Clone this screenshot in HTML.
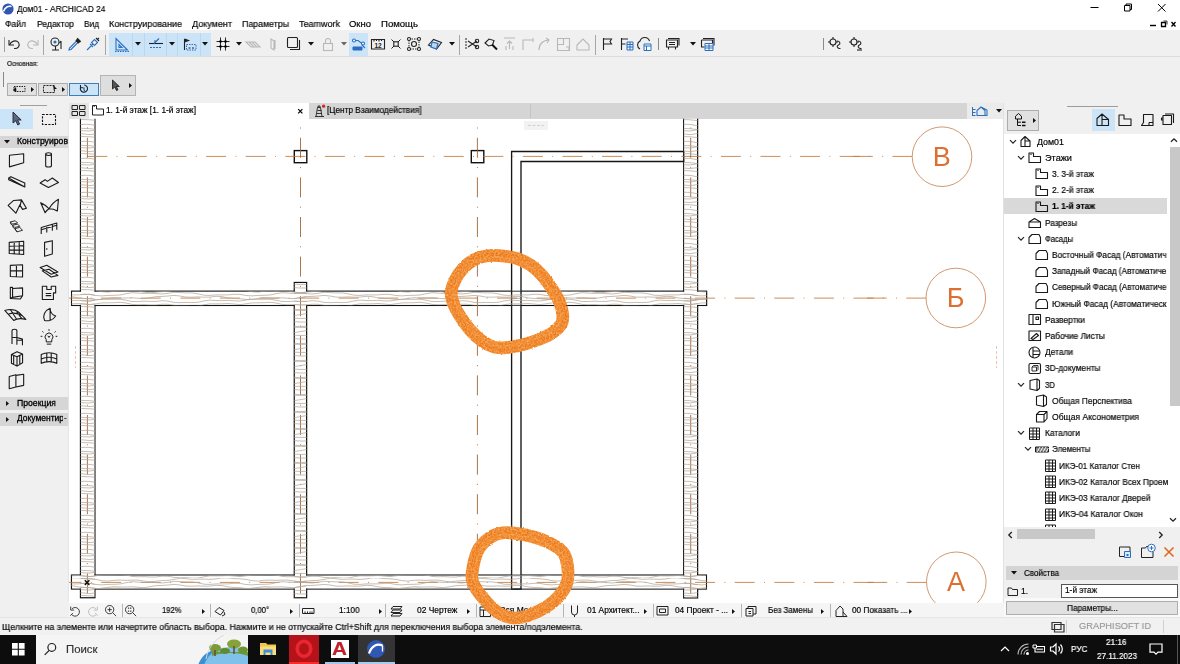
<!DOCTYPE html>
<html lang="ru"><head><meta charset="utf-8"><title>Дом01 - ARCHICAD 24</title>
<style>
html,body{margin:0;padding:0;}
body{width:1180px;height:664px;overflow:hidden;position:relative;background:#f0f0f0;font-family:"Liberation Sans",sans-serif;}
.t{position:absolute;white-space:nowrap;-webkit-text-stroke:.18px currentColor;will-change:transform;}
.b{position:absolute;box-sizing:border-box;overflow:visible;}
svg{shape-rendering:auto;}
</style></head><body>
<div class="b" style="left:0.0px;top:0.0px;width:1180.0px;height:30.3px;background:#fff;"></div>
<svg class="b" style="left:2.0px;top:3.0px;" width="12" height="12" viewBox="0 0 12 12"><circle cx="6" cy="6" r="5.6" fill="#2f56b0"/><path d="M1.5 8.5 C3 4 6.5 2.5 9.5 3.6" stroke="#fff" stroke-width="1.6" fill="none"/></svg>
<div class="t" style="left:17.0px;top:2.8px;font-size:9.60px;line-height:11.52px;transform:scaleX(0.8742);transform-origin:0 50%;color:#000;">Дом01 - ARCHICAD 24</div>
<div class="t" style="left:5.0px;top:18.8px;font-size:9.30px;line-height:11.16px;transform:scaleX(0.9185);transform-origin:0 50%;color:#000;">Файл</div>
<div class="t" style="left:37.0px;top:18.8px;font-size:9.30px;line-height:11.16px;transform:scaleX(0.9243);transform-origin:0 50%;color:#000;">Редактор</div>
<div class="t" style="left:84.0px;top:18.8px;font-size:9.30px;line-height:11.16px;transform:scaleX(0.8916);transform-origin:0 50%;color:#000;">Вид</div>
<div class="t" style="left:109.0px;top:18.8px;font-size:9.30px;line-height:11.16px;transform:scaleX(0.9682);transform-origin:0 50%;color:#000;">Конструирование</div>
<div class="t" style="left:192.0px;top:18.8px;font-size:9.30px;line-height:11.16px;transform:scaleX(0.9696);transform-origin:0 50%;color:#000;">Документ</div>
<div class="t" style="left:242.0px;top:18.8px;font-size:9.30px;line-height:11.16px;transform:scaleX(0.9481);transform-origin:0 50%;color:#000;">Параметры</div>
<div class="t" style="left:299.0px;top:18.8px;font-size:9.30px;line-height:11.16px;transform:scaleX(0.9676);transform-origin:0 50%;color:#000;">Teamwork</div>
<div class="t" style="left:349.0px;top:18.8px;font-size:9.30px;line-height:11.16px;transform:scaleX(1.0181);transform-origin:0 50%;color:#000;">Окно</div>
<div class="t" style="left:381.0px;top:18.8px;font-size:9.30px;line-height:11.16px;transform:scaleX(1.0301);transform-origin:0 50%;color:#000;">Помощь</div>
<svg class="b" style="left:1086.0px;top:0.0px;" width="90" height="16" viewBox="0 0 90 16"><path d="M4.5 7.5h8" stroke="#000" stroke-width="1"/><path d="M38.5 5.5h5.5v5.5h-5.5z M40 5.5v-1.5h5.5v5.5h-1.5" stroke="#000" stroke-width="1" fill="none"/><path d="M72 4l7.5 7.5M79.5 4l-7.5 7.5" stroke="#000" stroke-width="1"/></svg>
<svg class="b" style="left:1148.0px;top:18.0px;" width="32" height="12" viewBox="0 0 32 12"><path d="M2 7.5h6" stroke="#000" stroke-width="1.4"/><path d="M13.5 4.5h4v4h-4z" stroke="#000" stroke-width="1.3" fill="none"/><path d="M15.5 3h3.5v3.5" stroke="#000" stroke-width=".8" fill="none"/><path d="M23.5 4l4 4.5M27.5 4l-4 4.5" stroke="#000" stroke-width="1.3"/></svg>
<div class="b" style="left:0.0px;top:30.0px;width:1180.0px;height:27.0px;background:#f0f0f0;border-bottom:1px solid #dcdcdc;"></div>
<div class="b" style="left:0.0px;top:57.0px;width:1180.0px;height:46.0px;background:#f0f0f0;"></div>
<div class="b" style="left:4.0px;top:37.0px;width:1.0px;height:15.0px;background:#a0a0a0;"></div>
<svg class="b" style="left:7.0px;top:36.0px;" width="16" height="16" viewBox="0 0 16 16"><path d="M2 4v5h5" stroke="#222" fill="none" stroke-width="1.1"/><path d="M2.5 9 C4 5 9 3.5 11.5 6.5 C13.5 9.5 11 13 7 12.5" stroke="#222" fill="none" stroke-width="1.1"/></svg>
<svg class="b" style="left:24.0px;top:36.0px;" width="16" height="16" viewBox="0 0 16 16"><path d="M14 4v5h-5" stroke="#b8b8b8" fill="none" stroke-width="1.1"/><path d="M13.5 9 C12 5 7 3.5 4.5 6.5 C2.5 9.500 5 13 9 12.5" stroke="#b8b8b8" fill="none" stroke-width="1.1"/></svg>
<div class="b" style="left:43.0px;top:34.5px;width:1.0px;height:20.0px;background:#a6a6a6;"></div>
<svg class="b" style="left:49.0px;top:36.0px;" width="16" height="16" viewBox="0 0 16 16"><circle cx="6" cy="6" r="4" stroke="#222" fill="none" stroke-width="1.1"/><path d="M3 14h7M6.500 10v4" stroke="#222" fill="none" stroke-width="1.1"/><path d="M12 5v8M10.500 7l1.500-2" stroke="#222" fill="none" stroke-width="1.1"/><circle cx="6" cy="6" r="1.6" fill="#2a6fc0"/></svg>
<svg class="b" style="left:67.0px;top:36.0px;" width="16" height="16" viewBox="0 0 16 16"><path d="M2 14l2-.5 7-7-1.500-1.500-7 7z" stroke="#2a6fc0" fill="none" stroke-width="1.1"/><path d="M9 4l3 3M10 2.500l3.500 3.500" stroke="#222" stroke-width="1.800" fill="none"/></svg>
<svg class="b" style="left:85.0px;top:36.0px;" width="16" height="16" viewBox="0 0 16 16"><path d="M2 14l6-6M5 8l3 3M6.500 6.500l3 3 3-3-3-3z" stroke="#2a6fc0" fill="none" stroke-width="1.1"/><path d="M11 2l3 3M12.500 3.500l1.500-1.500" stroke="#222" fill="none" stroke-width="1.1"/></svg>
<div class="b" style="left:105.0px;top:34.5px;width:1.0px;height:20.0px;background:#a6a6a6;"></div>
<div class="b" style="left:109.4px;top:32.5px;width:101.6px;height:23.0px;background:#cce4f7;"></div>
<div class="b" style="left:131.8px;top:32.5px;width:1.0px;height:23.0px;background:#b9d7f0;"></div>
<div class="b" style="left:143.7px;top:32.5px;width:1.0px;height:23.0px;background:#b9d7f0;"></div>
<div class="b" style="left:166.0px;top:32.5px;width:1.0px;height:23.0px;background:#b9d7f0;"></div>
<div class="b" style="left:177.4px;top:32.5px;width:1.0px;height:23.0px;background:#b9d7f0;"></div>
<div class="b" style="left:199.7px;top:32.5px;width:1.0px;height:23.0px;background:#b9d7f0;"></div>
<svg class="b" style="left:114.0px;top:36.0px;" width="16" height="16" viewBox="0 0 16 16"><path d="M2 14V2.500L13.500 14z" stroke="#2a6fc0" fill="none" stroke-width="1.1"/><path d="M5 11.500V8.500l3 3z" stroke="#2a6fc0" fill="none" stroke-width="1.1"/><path d="M1 15.500h14" stroke="#2a6fc0" stroke-width="1" stroke-dasharray="1.500 1"/></svg>
<svg class="b" style="left:134.7px;top:42.0px;" width="6" height="4" viewBox="0 0 6 4"><path d="M0 0h6l-3 3.6z" fill="#111"/></svg>
<svg class="b" style="left:148.0px;top:36.0px;" width="16" height="16" viewBox="0 0 16 16"><path d="M1 7.500h14" stroke="#222" fill="none" stroke-width="1.1"/><path d="M6 7.500l5-5M8.500 5l-2.500 0" stroke="#2a6fc0" fill="none" stroke-width="1.1"/><path d="M2 11.500h12" stroke="#2a6fc0" stroke-width="1.200" stroke-dasharray="2 1"/></svg>
<svg class="b" style="left:168.7px;top:42.0px;" width="6" height="4" viewBox="0 0 6 4"><path d="M0 0h6l-3 3.6z" fill="#111"/></svg>
<svg class="b" style="left:182.0px;top:36.0px;" width="16" height="16" viewBox="0 0 16 16"><path d="M2.500 3v11M2.500 3l4 1.500-4 1.500" stroke="#222" stroke-width="1.100" fill="#222"/><path d="M4.500 8.500h9.500v5.500h-9.500z" stroke="#2a6fc0" fill="none" stroke-dasharray="1.500 1"/><path d="M6.500 12h2M10 12h2" stroke="#222" stroke-width="1.200"/></svg>
<svg class="b" style="left:202.3px;top:42.0px;" width="6" height="4" viewBox="0 0 6 4"><path d="M0 0h6l-3 3.6z" fill="#111"/></svg>
<svg class="b" style="left:215.0px;top:36.0px;" width="16" height="16" viewBox="0 0 16 16"><path d="M5.500 1.500v13M10.500 1.500v13M1.500 5.500h13M1.500 10.500h13" stroke="#111" stroke-width=".9"/><circle cx="5.500" cy="5.500" r="1.300"/><circle cx="10.500" cy="5.500" r="1.300"/><circle cx="5.500" cy="10.500" r="1.300"/><circle cx="10.500" cy="10.500" r="1.300"/></svg>
<svg class="b" style="left:236.0px;top:42.0px;" width="6" height="4" viewBox="0 0 6 4"><path d="M0 0h6l-3 3.6z" fill="#111"/></svg>
<svg class="b" style="left:245.0px;top:36.0px;" width="16" height="16" viewBox="0 0 16 16"><path d="M1 6l9 0 5 5-9 0z M4 6l5 5M7 6l5 5" stroke="#b8b8b8" fill="none" stroke-width="1.1"/></svg>
<svg class="b" style="left:266.0px;top:36.0px;" width="16" height="16" viewBox="0 0 16 16"><path d="M5 3l3 2v9l-3-2z M9 4v9" stroke="#b8b8b8" fill="none" stroke-width="1.1"/></svg>
<svg class="b" style="left:286.0px;top:36.0px;" width="16" height="16" viewBox="0 0 16 16"><rect x="1.500" y="1.500" width="10" height="10" rx="1" stroke="#222" fill="none" stroke-width="1.1"/><path d="M13.500 4v9.500h-9.500" stroke="#222" fill="none" stroke-width="1.1"/></svg>
<svg class="b" style="left:307.5px;top:42.0px;" width="6" height="4" viewBox="0 0 6 4"><path d="M0 0h6l-3 3.6z" fill="#111"/></svg>
<svg class="b" style="left:320.0px;top:36.0px;" width="16" height="16" viewBox="0 0 16 16"><rect x="3.500" y="7.500" width="9" height="7" stroke="#b8b8b8" fill="none" stroke-width="1.1"/><path d="M5.500 7.500v-2.500a2.500 2.500 0 0 1 5 0v2.500" stroke="#b8b8b8" fill="none" stroke-width="1.1"/></svg>
<svg class="b" style="left:340.6px;top:42.0px;" width="6" height="4" viewBox="0 0 6 4"><path d="M0 0h6l-3 3.6z" fill="#666"/></svg>
<div class="b" style="left:349.0px;top:32.5px;width:19.0px;height:23.0px;background:#cce4f7;"></div>
<svg class="b" style="left:351.0px;top:36.0px;" width="16" height="16" viewBox="0 0 16 16"><path d="M2 4.500h5l4 3h3" stroke="#2a6fc0" fill="none" stroke-width="1.1"/><circle cx="3" cy="4.500" r="1.500" fill="#fff" stroke="#2a6fc0" fill="none" stroke-width="1.1"/><circle cx="12" cy="7.500" r="1.500" fill="#fff" stroke="#2a6fc0" fill="none" stroke-width="1.1"/><path d="M2 11h9v3h-9z" stroke="#2a6fc0" fill="#2a6fc0"/><path d="M11 9l3 3" stroke="#2a6fc0" fill="none" stroke-width="1.1"/></svg>
<svg class="b" style="left:370.0px;top:36.0px;" width="16" height="16" viewBox="0 0 16 16"><path d="M1.500 3.500h13v9.500h-13zM4 3.500v2M6.500 3.500v1.500M9 3.500v2M11.500 3.500v1.500" stroke="#222" fill="none" stroke-width="1.1"/><text x="8" y="12" font-size="6.500" font-weight="bold" text-anchor="middle" fill="#222" font-family="Liberation Sans, sans-serif">12</text></svg>
<svg class="b" style="left:388.0px;top:36.0px;" width="16" height="16" viewBox="0 0 16 16"><path d="M3.500 3.500l9 9M12.500 3.500l-9 9" stroke="#222" stroke-width="1" fill="none"/><rect x="5.800" y="5.800" width="4.400" height="4.400" fill="#f0f0f0" stroke="#222" fill="none" stroke-width="1.1"/></svg>
<svg class="b" style="left:406.0px;top:36.0px;" width="16" height="16" viewBox="0 0 16 16"><path d="M3 3h10v10h-10z" stroke="#222" fill="none" stroke-dasharray="1.500 1"/><circle cx="3" cy="3" r="1.500" fill="#fff" stroke="#222" fill="none" stroke-width="1.1"/><circle cx="13" cy="3" r="1.500" fill="#fff" stroke="#222" fill="none" stroke-width="1.1"/><circle cx="13" cy="13" r="1.500" fill="#fff" stroke="#222" fill="none" stroke-width="1.1"/><circle cx="3" cy="13" r="1.500" fill="#fff" stroke="#222" fill="none" stroke-width="1.1"/><circle cx="8" cy="8" r="2.500" stroke="#222" fill="none" stroke-width="1.1"/></svg>
<svg class="b" style="left:427.0px;top:36.0px;" width="16" height="16" viewBox="0 0 16 16"><path d="M1.500 9l5-5.500 8 3-5 6.500z" stroke="#222" fill="none" stroke-width="1.1"/><path d="M5 6l6 1.500-1.500 5.500-5.500-2z" stroke="#2a6fc0" fill="#bcd7f2" stroke-width="1.200"/></svg>
<svg class="b" style="left:449.0px;top:42.0px;" width="6" height="4" viewBox="0 0 6 4"><path d="M0 0h6l-3 3.6z" fill="#111"/></svg>
<div class="b" style="left:459.0px;top:34.5px;width:1.0px;height:20.0px;background:#a6a6a6;"></div>
<svg class="b" style="left:464.0px;top:36.0px;" width="16" height="16" viewBox="0 0 16 16"><path d="M2 2v12" stroke="#222" stroke-width="1" stroke-dasharray="2 1"/><path d="M4 5l9 6M4 11l9-6" stroke="#222" fill="none" stroke-width="1.1"/><circle cx="13" cy="5" r="1.700" stroke="#222" fill="none" stroke-width="1.1"/><circle cx="13" cy="11" r="1.700" stroke="#222" fill="none" stroke-width="1.1"/></svg>
<svg class="b" style="left:483.0px;top:36.0px;" width="16" height="16" viewBox="0 0 16 16"><path d="M2 7l4-4 5 1.500-1.500 4.500-4 1z" stroke="#222" fill="none" stroke-width="1.1"/><path d="M9 8.500l5 5" stroke="#111" stroke-width="2"/></svg>
<svg class="b" style="left:502.0px;top:36.0px;" width="16" height="16" viewBox="0 0 16 16"><path d="M2 2h11M7.500 13v-8M5 7.500l2.500-2.500 2.500 2.500M4 10v4M11 10v4" stroke="#b8b8b8" fill="none" stroke-width="1.1"/></svg>
<svg class="b" style="left:520.0px;top:36.0px;" width="16" height="16" viewBox="0 0 16 16"><path d="M3 14v-10h10M13 2v4" stroke="#b8b8b8" fill="none" stroke-width="1.1"/></svg>
<svg class="b" style="left:537.0px;top:36.0px;" width="16" height="16" viewBox="0 0 16 16"><path d="M2 14c0-6 4-10 10-10M9 2l3 2-2 3" stroke="#b8b8b8" fill="none" stroke-width="1.1"/></svg>
<svg class="b" style="left:556.0px;top:36.0px;" width="16" height="16" viewBox="0 0 16 16"><path d="M1.500 2.500h12v12h-12z M7.500 2.500v6h-6M10 11h3v3" stroke="#b8b8b8" fill="none" stroke-width="1.1"/></svg>
<svg class="b" style="left:575.0px;top:36.0px;" width="16" height="16" viewBox="0 0 16 16"><path d="M2 9l6-6 6 6v5h-12z" stroke="#b8b8b8" fill="none" stroke-width="1.1"/></svg>
<div class="b" style="left:595.0px;top:34.5px;width:1.0px;height:20.0px;background:#a6a6a6;"></div>
<svg class="b" style="left:601.0px;top:36.0px;" width="16" height="16" viewBox="0 0 16 16"><path d="M2.500 2v12M2.500 3h8l-1.500 2.500 1.500 2.500h-8" stroke="#222" fill="none" stroke-width="1.1"/></svg>
<svg class="b" style="left:619.0px;top:36.0px;" width="16" height="16" viewBox="0 0 16 16"><path d="M2.500 2v12M2.500 3h6.500M2.500 8h4" stroke="#222" fill="none" stroke-width="1.1"/><path d="M8 6h6v8h-6zM8 8.500h6M8 11h6M11 6v8" stroke="#2a6fc0" stroke-width="1" fill="none"/></svg>
<svg class="b" style="left:637.0px;top:36.0px;" width="16" height="16" viewBox="0 0 16 16"><path d="M3 13a4.500 4.500 0 0 1 0-8 5 5 0 0 1 9.500 0" stroke="#222" fill="none" stroke-width="1.1"/><path d="M7 8h7v6.500h-7zM7 10h7M9.500 10v4.500" stroke="#2a6fc0" stroke-width="1" fill="#fff"/></svg>
<div class="b" style="left:658.0px;top:38.0px;width:1.0px;height:12.0px;background:#8a8a8a;"></div>
<svg class="b" style="left:665.0px;top:36.0px;" width="16" height="16" viewBox="0 0 16 16"><path d="M1.500 4h11v7h-11zM3 2.500h11v7M4 6.500h6M4 8.500h6M3.500 11v2.500M10.500 11v2.500" stroke="#222" fill="none" stroke-width="1.1"/></svg>
<svg class="b" style="left:689.5px;top:42.0px;" width="6" height="4" viewBox="0 0 6 4"><path d="M0 0h6l-3 3.6z" fill="#111"/></svg>
<svg class="b" style="left:700.0px;top:36.0px;" width="16" height="16" viewBox="0 0 16 16"><path d="M1.500 4h11v7h-3M3 2.500h11v7M1.500 4v7h3" stroke="#222" fill="none" stroke-width="1.1"/><path d="M5 7.500h8v7h-8zM5 10h8M5 12h8M9 7.500v7" stroke="#2a6fc0" stroke-width="1" fill="#fff"/></svg>
<div class="b" style="left:823.0px;top:38.0px;width:1.0px;height:12.0px;background:#8a8a8a;"></div>
<svg class="b" style="left:827.0px;top:36.0px;" width="16" height="16" viewBox="0 0 16 16"><circle cx="6" cy="6" r="3" stroke="#222" fill="none" stroke-width="1.1"/><path d="M6 1v2M6 9v2M1 6h2M9 6h2" stroke="#222" fill="none" stroke-width="1.1"/><path d="M10 5c3 0 4 3 1.500 4s-1 4 2 3.500" stroke="#222" fill="none" stroke-width="1.1"/></svg>
<svg class="b" style="left:848.0px;top:36.0px;" width="16" height="16" viewBox="0 0 16 16"><circle cx="6" cy="6" r="3" stroke="#222" fill="none" stroke-width="1.1"/><path d="M6 1v2M6 9v2M1 6h2M9 6h2" stroke="#222" fill="none" stroke-width="1.1"/><path d="M10 5c3 0 4 3 1.500 4s-1 4 2 3.500" stroke="#222" fill="none" stroke-width="1.1"/><path d="M9 14h5" stroke="#222" fill="none" stroke-width="1.1"/></svg>
<div class="t" style="left:7.0px;top:60.1px;font-size:7.00px;line-height:8.40px;transform:scaleX(0.9140);transform-origin:0 50%;color:#111;">Основная:</div>
<div class="b" style="left:3.0px;top:72.0px;width:1.0px;height:15.0px;background:#888;"></div>
<div class="b" style="left:7.0px;top:82.5px;width:29.5px;height:13.0px;background:#e1e1e1;border:1px solid #adadad;"></div>
<div class="b" style="left:38.0px;top:82.5px;width:29.5px;height:13.0px;background:#e1e1e1;border:1px solid #adadad;"></div>
<div class="b" style="left:69.0px;top:82.5px;width:30.0px;height:13.0px;background:#cce4f7;border:1px solid #3d7fb8;"></div>
<div class="b" style="left:100.0px;top:75.0px;width:36.0px;height:20.5px;background:#dedede;border:1px solid #b4b4b4;"></div>
<svg class="b" style="left:11.0px;top:84.0px;" width="18" height="10" viewBox="0 0 18 10"><path d="M3 2.500h11v5h-11z" stroke="#222" fill="none" stroke-dasharray="1.500 1"/><path d="M2 6l3-3 .5 5z" fill="#111"/></svg>
<svg class="b" style="left:30.5px;top:86.5px;" width="3" height="5" viewBox="0 0 3 5"><path d="M0 0v5l3-2.500z" fill="#111"/></svg>
<svg class="b" style="left:42.0px;top:84.0px;" width="18" height="10" viewBox="0 0 18 10"><path d="M1.500 1.500h11v7h-11z" stroke="#222" fill="none" stroke-dasharray="2 1"/><path d="M11 1l4 4h-2.500l-.5 2.500z" fill="#111"/></svg>
<svg class="b" style="left:61.5px;top:86.5px;" width="3" height="5" viewBox="0 0 3 5"><path d="M0 0v5l3-2.500z" fill="#111"/></svg>
<svg class="b" style="left:78.0px;top:84.0px;" width="12" height="10" viewBox="0 0 12 10"><path d="M2.500 3.500a3.600 3.600 0 1 0 3.600-2.500M2.500 1v2.800h2.800" stroke="#123" stroke-width="1.100" fill="none"/><path d="M6 3.500v3l1.500 1" stroke="#123" stroke-width=".9" fill="none"/></svg>
<svg class="b" style="left:111.0px;top:79.0px;" width="10" height="13" viewBox="0 0 10 13"><path d="M1.500 1v9l2.300-2 1.700 3.500 1.500-.7-1.700-3.300h3z" fill="#555" stroke="#111" stroke-width=".8"/></svg>
<svg class="b" style="left:129.0px;top:82.5px;" width="3" height="5" viewBox="0 0 3 5"><path d="M0 0v5l3-2.500z" fill="#111"/></svg>
<div class="b" style="left:69.0px;top:102.6px;width:898.0px;height:16.0px;background:#d5d5d5;"></div>
<div class="b" style="left:967.0px;top:102.6px;width:36.5px;height:16.0px;background:#ebebeb;"></div>
<div class="b" style="left:69.0px;top:102.6px;width:20.0px;height:16.0px;background:#e4e4e4;"></div>
<svg class="b" style="left:71.0px;top:104.0px;" width="15" height="13" viewBox="0 0 15 13"><path d="M1 1.500h5.500v4h-5.500zM8.500 1.500h5.500v4h-5.500zM1 7.500h5.500v4h-5.500zM8.500 7.500h5.500v4h-5.500z" stroke="#222" stroke-width="1" fill="none"/></svg>
<div class="b" style="left:89.0px;top:102.6px;width:220.0px;height:16.0px;background:#fff;"></div>
<svg class="b" style="left:91.0px;top:104.0px;" width="14" height="12" viewBox="0 0 14 12"><path d="M1.500 1.500h4v3.500h7v6h-11z" stroke="#222" stroke-width="1" fill="none"/><path d="M2.500 2.500h1.500" stroke="#2a6fc0" stroke-width="1.200"/></svg>
<div class="t" style="left:106.4px;top:105.7px;font-size:8.30px;line-height:9.96px;transform:scaleX(1.0014);transform-origin:0 50%;color:#000;">1. 1-й этаж [1. 1-й этаж]</div>
<svg class="b" style="left:296.5px;top:107.5px;" width="7" height="7" viewBox="0 0 7 7"><path d="M1.200 1.200l4.200 4.200M5.400 1.200l-4.200 4.200" stroke="#000" stroke-width="1.200"/></svg>
<svg class="b" style="left:313.0px;top:103.5px;" width="13" height="14" viewBox="0 0 13 14"><path d="M3 12.500l1.500-9h3l1.500 9M2 12.500h9M5 3.500v-1.500h2v1.500M4.500 6.500h4M4 9.500h5" stroke="#222" stroke-width=".9" fill="none"/><circle cx="10.600" cy="2.200" r="1.600" fill="#e02020"/></svg>
<div class="t" style="left:326.8px;top:105.7px;font-size:8.30px;line-height:9.96px;transform:scaleX(0.9948);transform-origin:0 50%;color:#000;">[Центр Взаимодействия]</div>
<div class="b" style="left:530.0px;top:103.5px;width:1.0px;height:14.0px;background:#c4c4c4;"></div>
<svg class="b" style="left:971.0px;top:105.0px;" width="22" height="12" viewBox="0 0 22 12"><path d="M1.500 2v9M1.500 4.500h3M1.500 7.500h3M1.500 10.500h3" stroke="#2a6fc0" stroke-width="1" fill="none"/><path d="M6 10.500v-5l4-3.500 4 3.500v5zM10 2l6 3v5.500h-2" stroke="#2a6fc0" stroke-width="1.100" fill="none"/></svg>
<svg class="b" style="left:996.0px;top:109.0px;" width="6" height="4" viewBox="0 0 6 4"><path d="M0 0h6l-3 3.6z" fill="#111"/></svg>
<div class="b" style="left:0.0px;top:103.0px;width:68.5px;height:508.0px;background:#f0f0f0;"></div>
<div class="b" style="left:20.0px;top:105.0px;width:27.0px;height:1.0px;background:#a0a0a0;"></div>
<div class="b" style="left:0.0px;top:109.0px;width:32.5px;height:19.5px;background:#cce4f7;"></div>
<svg class="b" style="left:11.0px;top:111.0px;" width="12" height="16" viewBox="0 0 12 16"><path d="M2 1v11l2.800-2.300 2 4.300 1.800-.9-2-4.100h3.600z" fill="#5a6a7a" stroke="#223" stroke-width=".9"/></svg>
<svg class="b" style="left:41.0px;top:113.0px;" width="16" height="13" viewBox="0 0 16 13"><path d="M1.500 1.500h13v10h-13z" stroke="#111" stroke-width="1.100" fill="none" stroke-dasharray="2.200 1.300"/></svg>
<div class="b" style="left:0.0px;top:135.5px;width:68.5px;height:12.0px;background:#d6d6d6;"></div>
<svg class="b" style="left:4.0px;top:140.0px;" width="6" height="4" viewBox="0 0 6 4"><path d="M0 0h6l-3 3.600z" fill="#111"/></svg>
<div class="t" style="left:17.0px;top:136.5px;font-size:8.30px;line-height:9.96px;transform:scaleX(1.0422);transform-origin:0 50%;color:#000;-webkit-text-stroke:.3px #000;overflow:hidden;max-width:51.5px;">Конструиров</div>
<div class="b" style="left:0.0px;top:397.0px;width:68.5px;height:13.0px;background:#d6d6d6;"></div>
<svg class="b" style="left:5.5px;top:401.0px;" width="3" height="5" viewBox="0 0 3 5"><path d="M0 0v5l3-2.500z" fill="#111"/></svg>
<div class="t" style="left:17.0px;top:398.5px;font-size:8.30px;line-height:9.96px;transform:scaleX(1.0448);transform-origin:0 50%;color:#000;-webkit-text-stroke:.3px #000;overflow:hidden;max-width:51.5px;">Проекция</div>
<div class="b" style="left:0.0px;top:412.5px;width:68.5px;height:13.0px;background:#d6d6d6;"></div>
<svg class="b" style="left:5.5px;top:416.5px;" width="3" height="5" viewBox="0 0 3 5"><path d="M0 0v5l3-2.500z" fill="#111"/></svg>
<div class="t" style="left:17.0px;top:414.0px;font-size:8.30px;line-height:9.96px;transform:scaleX(1.0202);transform-origin:0 50%;color:#000;-webkit-text-stroke:.3px #000;overflow:hidden;max-width:51.5px;">Документир</div>
<div class="b" style="left:0.0px;top:410.0px;width:68.5px;height:2.5px;background:#f0f0f0;"></div>
<div class="b" style="left:63.0px;top:412.5px;width:5.5px;height:13.0px;background:#d6d6d6;"></div>
<div class="t" style="left:63.5px;top:413.2px;font-size:8.00px;line-height:9.60px;color:#000;">-</div>
<svg class="b" style="left:7.0px;top:151.2px;" width="20" height="17.8" viewBox="0 0 18 16"><path d="M2.200 3.800L15 2.500V10.500L2.200 14.300Z" stroke="#1a1a1a" fill="none" stroke-width="1" stroke-linejoin="round"/></svg>
<svg class="b" style="left:39.0px;top:151.2px;" width="20" height="17.8" viewBox="0 0 18 16"><path d="M6 2.800a2.600 1.200 0 0 1 5.200 0v10.400a2.600 1.200 0 0 1-5.200 0z M6 2.800a2.600 1.200 0 0 0 5.200 0" stroke="#1a1a1a" fill="none" stroke-width="1" stroke-linejoin="round"/></svg>
<svg class="b" style="left:7.0px;top:173.2px;" width="20" height="17.8" viewBox="0 0 18 16"><path d="M1.500 4.500l2-1.200 12.500 5.700v3.500z M1.500 4.500v1.500l14.500 6.500" stroke="#1a1a1a" fill="none" stroke-width="1" stroke-linejoin="round"/></svg>
<svg class="b" style="left:39.0px;top:173.2px;" width="20" height="17.8" viewBox="0 0 18 16"><path d="M1 9l4.500-3 2 1.500 4.500-3 5.500 4-9 4.500z" stroke="#1a1a1a" fill="none" stroke-width="1" stroke-linejoin="round"/></svg>
<svg class="b" style="left:7.0px;top:195.7px;" width="20" height="17.8" viewBox="0 0 18 16"><path d="M1 8.500L6 4l7-.5 4.500 7.500-3.500 1-2.500-4L8 15.500z M13 3.500l-1 4.500" stroke="#1a1a1a" fill="none" stroke-width="1" stroke-linejoin="round"/></svg>
<svg class="b" style="left:39.0px;top:195.7px;" width="20" height="17.8" viewBox="0 0 18 16"><path d="M1.500 6c3 1.500 6 3.500 7.500 5.500 2-3.500 5-6.500 8.500-8.500l-1 10.500c-2.500-1.500-5-2-7.500-2-1.500 1-2.500 2-3.500 3.500z" stroke="#1a1a1a" fill="none" stroke-width="1" stroke-linejoin="round"/></svg>
<svg class="b" style="left:7.0px;top:217.7px;" width="20" height="17.8" viewBox="0 0 18 16"><path d="M3 3.500l4.500-1 2 2-4.500 1zM5 6.500l4.500-1 2 2-4.500 1zM7 9.500l4.500-1 2.500 2.500-5 1.500zM3 3.500l.5 2 1.500 1 .5 2 1.500 1 2 3" stroke="#1a1a1a" fill="none" stroke-width=".8"/></svg>
<svg class="b" style="left:39.0px;top:217.7px;" width="20" height="17.8" viewBox="0 0 18 16"><path d="M2 14.500v-6l14-4v6M2 10.500l14-4M7 7v6M12 5.500v6" stroke="#1a1a1a" fill="none" stroke-width="1" stroke-linejoin="round"/></svg>
<svg class="b" style="left:7.0px;top:239.2px;" width="20" height="17.8" viewBox="0 0 18 16"><path d="M2 3l13-1v12l-13-1zM2 6.500l13-.5M2 10l13 0M6.500 2.700v10.600M11 2.400v11.400" stroke="#1a1a1a" fill="none" stroke-width="1" stroke-linejoin="round"/></svg>
<svg class="b" style="left:39.0px;top:239.2px;" width="20" height="17.8" viewBox="0 0 18 16"><path d="M5 3l7-1.500v12l-7 2z" stroke="#1a1a1a" fill="none" stroke-width="1" stroke-linejoin="round"/><circle cx="7" cy="9" r=".7" fill="#111"/></svg>
<svg class="b" style="left:7.0px;top:262.2px;" width="20" height="17.8" viewBox="0 0 18 16"><path d="M3 3l11-.5v11l-11-.5zM3 8h11M8.500 2.700v10.600" stroke="#1a1a1a" fill="none" stroke-width="1" stroke-linejoin="round"/></svg>
<svg class="b" style="left:39.0px;top:262.2px;" width="20" height="17.8" viewBox="0 0 18 16"><path d="M1 5l6-2 10 6-6 2zM3 8l6-1.500 8 5.500-6 1.500z" stroke="#1a1a1a" fill="none" stroke-width="1" stroke-linejoin="round"/></svg>
<svg class="b" style="left:7.0px;top:284.2px;" width="20" height="17.8" viewBox="0 0 18 16"><path d="M3 3l2 0v9l-2 1zM5 4l9-.5v7l-9 1.500M3 13l9 .5 2-3" stroke="#1a1a1a" fill="none" stroke-width="1" stroke-linejoin="round"/></svg>
<svg class="b" style="left:39.0px;top:284.2px;" width="20" height="17.8" viewBox="0 0 18 16"><path d="M3 2h4v3h4v-3h4v6h-2v6h-10z M6 8.500h5M6 10.500h5" stroke="#1a1a1a" fill="none" stroke-width="1" stroke-linejoin="round"/></svg>
<svg class="b" style="left:7.0px;top:306.2px;" width="20" height="17.8" viewBox="0 0 18 16"><path d="M-2 4c5-1.500 10-.5 13 2l6 6c-4-1-8-1-11 1zM3 3.200l5.500 8.500M7.500 3.600l6 8M1.500 7.200c4.500-1.500 9-.5 12.500 1.600" stroke="#1a1a1a" fill="none" stroke-width="1" stroke-linejoin="round"/></svg>
<svg class="b" style="left:39.0px;top:306.2px;" width="20" height="17.8" viewBox="0 0 18 16"><path d="M5 13c-2-4 0-9 5-11 0 4 2 6 5 7-2 3-6 5-10 4zM10 2v11" stroke="#1a1a1a" fill="none" stroke-width="1" stroke-linejoin="round"/></svg>
<svg class="b" style="left:7.0px;top:327.7px;" width="20" height="17.8" viewBox="0 0 18 16"><path d="M4.500 14.500V2.500a2.200 1.400 0 0 1 4.400 0V8.500M4.500 8.500h4.400l5 1.500v5.500M8.900 8.500v2.500h5M8.900 11v4" stroke="#1a1a1a" fill="none" stroke-width="1" stroke-linejoin="round"/></svg>
<svg class="b" style="left:39.0px;top:327.7px;" width="20" height="17.8" viewBox="0 0 18 16"><path d="M6.500 10.500a3.500 3.500 0 1 1 5 0v2h-5zM7 14.500h4M9 1v1.500M3 3l1 1M15 3l-1 1M1.500 7.500h1.500M16.500 7.500h-1.500M8 7l1 1.500 1-1.500" stroke="#1a1a1a" fill="none" stroke-width=".9"/></svg>
<svg class="b" style="left:7.0px;top:350.2px;" width="20" height="17.8" viewBox="0 0 18 16"><path d="M4 4l5-2.500 5 2v8l-5 3-5-2.500zM4 4l5 2 5-2.500M9 6v8.500M6 5v8M11.500 5v8.500" stroke="#1a1a1a" fill="none" stroke-width="1" stroke-linejoin="round"/></svg>
<svg class="b" style="left:39.0px;top:350.2px;" width="20" height="17.8" viewBox="0 0 18 16"><path d="M2 4c4-2 10-2 14 0v8c-4-2-10-2-14 0zM2 8c4-2 10-2 14 0M7 2.800v8M11 2.800v8" stroke="#1a1a1a" fill="none" stroke-width="1" stroke-linejoin="round"/></svg>
<svg class="b" style="left:7.0px;top:372.2px;" width="20" height="17.8" viewBox="0 0 18 16"><path d="M2 4l6-1.500v11l-6 1.500zM8 3l7-1v10l-7 1.500" stroke="#1a1a1a" fill="none" stroke-width="1" stroke-linejoin="round"/></svg>
<div class="b" style="left:68.3px;top:118.5px;width:0.7px;height:484.0px;background:#e4e4e4;"></div>
<div class="b" style="left:69.0px;top:118.7px;width:934.2px;height:484.1px;background:#fff;"></div>
<svg class="b" style="left:0;top:0" width="1180" height="664" viewBox="0 0 1180 664"><defs><pattern id="wood" width="150" height="17" patternUnits="userSpaceOnUse"><path d="M0 3.8L6 3.2L12 2.6L18 2.4L24 1.4L30 0.3L36 0.7L42 1.3L48 1.1L54 1.1L60 1.4L66 0.9L72 -0.2L78 -0.2L84 0.6L90 0.8L96 1.4L102 2.7L108 3.1L114 2.3L120 2.1L126 2.4L132 2.1L138 2.1L144 3.1L150 3.8" stroke="#b3a799" stroke-width=".75" fill="none"/><path d="M0 4.2L6 4.6L12 5.0L18 4.3L24 3.3L30 3.6L36 3.9L42 3.9L48 4.8L54 6.2L60 6.4L66 5.9L72 5.9L78 5.9L84 5.3L90 5.4L96 6.5L102 6.9L108 6.4L114 6.3L120 6.0L126 4.7L132 3.7L138 4.1L144 4.4L150 4.2" stroke="#b3a799" stroke-width=".75" fill="none"/><path d="M0 8.7L6 7.7L12 7.4L18 7.0L24 6.4L30 7.0L36 8.1L42 8.2L48 7.9L54 8.2L60 8.1L66 7.3L72 7.6L78 8.9L84 9.5L90 9.7L96 10.4L102 10.5L108 9.4L114 8.7L120 9.0L126 9.0L132 8.8L138 9.3L144 9.7L150 8.7" stroke="#b3a799" stroke-width=".75" fill="none"/><path d="M0 12.4L6 12.4L12 11.7L18 12.1L24 13.4L30 13.7L36 13.4L42 13.6L48 13.3L54 11.9L60 11.1L66 11.5L72 11.6L78 11.3L84 11.8L90 12.0L96 11.0L102 10.1L108 10.3L114 10.3L120 10.2L126 11.2L132 12.5L138 12.5L144 12.2L150 12.4" stroke="#b3a799" stroke-width=".75" fill="none"/><path d="M0 16.0L6 16.0L12 15.2L18 15.3L24 16.4L30 16.8L36 16.7L42 17.2L48 17.1L54 15.8L60 14.8L66 14.9L72 14.8L78 14.5L84 15.0L90 15.6L96 14.8L102 13.9L108 13.8L114 13.7L120 13.3L126 14.0L132 15.4L138 15.8L144 15.6L150 16.0" stroke="#b3a799" stroke-width=".75" fill="none"/></pattern><clipPath id="cc"><rect x="69" y="118.7" width="934.2" height="484.1"/></clipPath></defs><g clip-path="url(#cc)"><rect x="80.5" y="100" width="14.4" height="497.7" fill="none" stroke="#141414" stroke-width="1.3"/><rect x="294.3" y="282.5" width="12.3" height="315.2" fill="none" stroke="#141414" stroke-width="1.3"/><rect x="683.7" y="100" width="13.9" height="497.9" fill="none" stroke="#141414" stroke-width="1.3"/><rect x="71.6" y="291.2" width="635" height="14.2" fill="none" stroke="#141414" stroke-width="1.3"/><rect x="71.5" y="575.1" width="634.9" height="13.9" fill="none" stroke="#141414" stroke-width="1.3"/><rect x="81.1" y="100.6" width="13.2" height="496.5" fill="#fff"/><rect x="294.9" y="283.1" width="11.1" height="314" fill="#fff"/><rect x="684.3" y="100.6" width="12.7" height="496.7" fill="#fff"/><rect x="72.2" y="291.8" width="633.8" height="13" fill="#fff"/><rect x="72.1" y="575.7" width="633.7" height="12.7" fill="#fff"/><path d="M511.600 151.500H683.700V161.500H521V589H511.600z" fill="#fff" stroke="#161616" stroke-width="1.35"/><path d="M511.300 291.200H521.200M511.300 305.400H521.200M511.300 575.100H521.200" stroke="#333" stroke-width="1"/><path d="M511.300 298.300H521.200" stroke="#999" stroke-width=".8"/><rect x="294.3" y="150.6" width="12.5" height="12.1" fill="#fff" stroke="#111" stroke-width="1.4"/><rect x="471.3" y="150.6" width="12.5" height="12.1" fill="#fff" stroke="#111" stroke-width="1.4"/><path d="M87.3 156.4H872.5" stroke="#c6783a" stroke-width=".85" fill="none" stroke-dasharray="20 9.300 1 9.300" stroke-dashoffset="0.0"/><path d="M66 298.1H886.5" stroke="#c6783a" stroke-width=".85" fill="none" stroke-dasharray="20 9.300 1 9.300" stroke-dashoffset="4.5"/><path d="M66 582.4H887" stroke="#c6783a" stroke-width=".85" fill="none" stroke-dasharray="20 9.300 1 9.300" stroke-dashoffset="4.5"/><path d="M87.4 119V597" stroke="#9c5c2b" stroke-width=".85" fill="none" stroke-dasharray="20 9.300 1 9.300" stroke-dashoffset="20.8"/><path d="M300.5 119V597" stroke="#9c5c2b" stroke-width=".85" fill="none" stroke-dasharray="20 9.300 1 9.300" stroke-dashoffset="20.8"/><path d="M477.4 119V597" stroke="#9c5c2b" stroke-width=".85" fill="none" stroke-dasharray="20 9.300 1 9.300" stroke-dashoffset="20.8"/><path d="M690.7 119V597" stroke="#9c5c2b" stroke-width=".85" fill="none" stroke-dasharray="20 9.300 1 9.300" stroke-dashoffset="20.8"/><path d="M912.400 156.400H853M926.300 298.100H867M926.800 582.400H867.500" stroke="#c6783a" stroke-width=".85" fill="none" stroke-dasharray="20 9.300 1 9.300"/><rect x="80.5" y="100" width="14.4" height="497.7" fill="url(#wood)"/><rect x="294.3" y="282.5" width="12.3" height="315.2" fill="url(#wood)"/><rect x="683.7" y="100" width="13.9" height="497.9" fill="url(#wood)"/><rect x="71.6" y="291.2" width="635" height="14.2" fill="url(#wood)"/><rect x="71.5" y="575.1" width="634.9" height="13.9" fill="url(#wood)"/><path d="M84.800 580.300l4.600 4.600M89.400 580.300l-4.600 4.600" stroke="#111" stroke-width="1.500"/><circle cx="942" cy="156.7" r="29.8" fill="#fff" stroke="#c98558" stroke-width=".85"/><text x="941.8" y="166.1" font-size="27" fill="#dd6f31" text-anchor="middle" font-family="Liberation Sans, sans-serif">В</text><circle cx="955.8" cy="298" r="29.8" fill="#fff" stroke="#c98558" stroke-width=".85"/><text x="955.6" y="307.4" font-size="27" fill="#dd6f31" text-anchor="middle" font-family="Liberation Sans, sans-serif">Б</text><circle cx="956.3" cy="581.8" r="29.8" fill="#fff" stroke="#c98558" stroke-width=".85"/><text x="956.1" y="591.2" font-size="27" fill="#dd6f31" text-anchor="middle" font-family="Liberation Sans, sans-serif">А</text><rect x="524" y="121" width="24" height="9" fill="#f2f2f2"/><path d="M528 125.500h16" stroke="#d2d2d2" stroke-width="1" stroke-dasharray="3 1.500"/><path d="M75.500 346v22" stroke="#e9c9b5" stroke-width="1" stroke-dasharray="3 2"/><path d="M996.500 346v22" stroke="#e9c9b5" stroke-width="1" stroke-dasharray="3 2"/></g></svg>
<div class="b" style="left:1003.0px;top:102.6px;width:1.3px;height:510.0px;background:#e2e2e2;"></div>
<div class="b" style="left:1004.3px;top:102.6px;width:176.0px;height:516.0px;background:#f0f0f0;"></div>
<div class="b" style="left:1066.8px;top:105.5px;width:51.0px;height:1.0px;background:#9c9c9c;"></div>
<div class="b" style="left:1007.0px;top:110.0px;width:31.5px;height:20.5px;background:#e1e1e1;border:1px solid #adadad;"></div>
<svg class="b" style="left:1013.0px;top:112.0px;" width="14" height="16" viewBox="0 0 14 16"><path d="M2.500 7v-2.800l3-2.700 3 2.700v2.800z" stroke="#111" stroke-width="1" fill="none"/><path d="M4.500 7v6.500h3.500M4.500 10.200h3.500" stroke="#111" stroke-width="1" fill="none"/><path d="M9 10.200h3.500M9 13.500h3.500" stroke="#111" stroke-width="1.500"/></svg>
<svg class="b" style="left:1032.5px;top:117.5px;" width="3" height="5" viewBox="0 0 3 5"><path d="M0 0v5l3-2.500z" fill="#111"/></svg>
<div class="b" style="left:1091.5px;top:109.0px;width:23.0px;height:22.0px;background:#cce4f7;"></div>
<svg class="b" style="left:1095.0px;top:112.0px;" width="16" height="16" viewBox="0 0 16 16"><path d="M2 13.500v-7l5-4.500 6.500 5.500v6zM7 2v11.500M7 7.500l6.500 0" stroke="#1a1a1a" stroke-width="1.1" fill="none" stroke-linejoin="round"/></svg>
<svg class="b" style="left:1117.0px;top:112.0px;" width="16" height="16" viewBox="0 0 16 16"><path d="M2 13.500v-10.500h5v4h7v6.500z" stroke="#1a1a1a" stroke-width="1.1" fill="none" stroke-linejoin="round"/></svg>
<svg class="b" style="left:1139.0px;top:112.0px;" width="16" height="16" viewBox="0 0 16 16"><path d="M4.500 2.500h9.500v11h-11.500l2-3zM10 10.500h4M10 10.500v3" stroke="#1a1a1a" stroke-width="1.1" fill="none" stroke-linejoin="round"/></svg>
<svg class="b" style="left:1160.0px;top:112.0px;" width="16" height="16" viewBox="0 0 16 16"><path d="M3 3.500h8.500v9h-8.500zM5 2h8.500v9M3 6h-1.500v2h1.500" stroke="#1a1a1a" stroke-width="1.1" fill="none" stroke-linejoin="round"/></svg>
<div class="b" style="left:1004.3px;top:134.0px;width:163.7px;height:393.0px;background:#fff;"></div>
<div class="b" style="left:1168.0px;top:134.0px;width:12.0px;height:393.0px;background:#fff;"></div>
<div class="b" style="left:1169.5px;top:147.0px;width:10.5px;height:259.0px;background:#c8c8c8;"></div>
<svg class="b" style="left:1170.0px;top:137.0px;" width="8" height="6" viewBox="0 0 8 6"><path d="M1 4.800l3-3 3 3" stroke="#222" stroke-width="1.300" fill="none"/></svg>
<svg class="b" style="left:1169.0px;top:517.0px;" width="8" height="6" viewBox="0 0 8 6"><path d="M1 1.200l3 3 3-3" stroke="#222" stroke-width="1.300" fill="none"/></svg>
<div class="b" style="left:1004.3px;top:198.3px;width:163.2px;height:15.5px;background:#d9d9d9;"></div>
<svg class="b" style="left:1009.0px;top:138.5px;" width="8" height="6" viewBox="0 0 8 6"><path d="M1 1.200l3 3 3-3" stroke="#222" stroke-width="1.200" fill="none"/></svg>
<svg class="b" style="left:1020.0px;top:135.0px;" width="14" height="13" viewBox="0 0 14 13"><path d="M1 11.500v-6l4-4 5 4.500v5.500zM5 1.500v10M5 6h5" stroke="#1a1a1a" stroke-width="1.1" fill="none" stroke-linejoin="round"/></svg>
<div class="t" style="left:1037.0px;top:136.5px;font-size:8.60px;line-height:10.32px;transform:scaleX(1.0313);transform-origin:0 50%;color:#000;">Дом01</div>
<svg class="b" style="left:1016.5px;top:154.7px;" width="8" height="6" viewBox="0 0 8 6"><path d="M1 1.200l3 3 3-3" stroke="#222" stroke-width="1.200" fill="none"/></svg>
<svg class="b" style="left:1027.5px;top:151.2px;" width="14" height="13" viewBox="0 0 14 13"><path d="M1 11.500v-9.500h4.500v3.500h7v6z" stroke="#1a1a1a" stroke-width="1.1" fill="none" stroke-linejoin="round"/><path d="M2.200 3.300h1.600" stroke="#222" stroke-width=".9"/></svg>
<div class="t" style="left:1044.5px;top:152.7px;font-size:8.60px;line-height:10.32px;transform:scaleX(1.0646);transform-origin:0 50%;color:#000;">Этажи</div>
<svg class="b" style="left:1035.0px;top:167.4px;" width="14" height="13" viewBox="0 0 14 13"><path d="M1 11.500v-9.500h4.500v3.500h7v6z" stroke="#1a1a1a" stroke-width="1.1" fill="none" stroke-linejoin="round"/><path d="M2.200 3.300h1.600" stroke="#222" stroke-width=".9"/></svg>
<div class="t" style="left:1052.0px;top:168.9px;font-size:8.60px;line-height:10.32px;transform:scaleX(0.9773);transform-origin:0 50%;color:#000;">3. 3-й этаж</div>
<svg class="b" style="left:1035.0px;top:183.6px;" width="14" height="13" viewBox="0 0 14 13"><path d="M1 11.500v-9.500h4.500v3.500h7v6z" stroke="#1a1a1a" stroke-width="1.1" fill="none" stroke-linejoin="round"/><path d="M2.200 3.300h1.600" stroke="#222" stroke-width=".9"/></svg>
<div class="t" style="left:1052.0px;top:185.1px;font-size:8.60px;line-height:10.32px;transform:scaleX(0.9773);transform-origin:0 50%;color:#000;">2. 2-й этаж</div>
<svg class="b" style="left:1035.0px;top:199.8px;" width="14" height="13" viewBox="0 0 14 13"><path d="M1 11.500v-9.500h4.500v3.500h7v6z" stroke="#1a1a1a" stroke-width="1.1" fill="none" stroke-linejoin="round"/><path d="M2.200 3.300h1.600" stroke="#222" stroke-width=".9"/></svg>
<div class="t" style="left:1052.0px;top:201.3px;font-size:8.60px;line-height:10.32px;transform:scaleX(0.9639);transform-origin:0 50%;font-weight:bold;color:#000;">1. 1-й этаж</div>
<svg class="b" style="left:1027.5px;top:216.0px;" width="14" height="13" viewBox="0 0 14 13"><path d="M1 11.500v-5.500l5.500-3.500 6 3.500v5.500zM1 6h11.500" stroke="#1a1a1a" stroke-width="1.1" fill="none" stroke-linejoin="round"/></svg>
<div class="t" style="left:1044.5px;top:217.5px;font-size:8.60px;line-height:10.32px;transform:scaleX(0.9530);transform-origin:0 50%;color:#000;">Разрезы</div>
<svg class="b" style="left:1016.5px;top:235.7px;" width="8" height="6" viewBox="0 0 8 6"><path d="M1 1.200l3 3 3-3" stroke="#222" stroke-width="1.200" fill="none"/></svg>
<svg class="b" style="left:1027.5px;top:232.2px;" width="14" height="13" viewBox="0 0 14 13"><path d="M1 11.500v-6l3-3h7l1.500 3v6z" stroke="#1a1a1a" stroke-width="1.1" fill="none" stroke-linejoin="round"/></svg>
<div class="t" style="left:1044.5px;top:233.7px;font-size:8.60px;line-height:10.32px;transform:scaleX(0.8860);transform-origin:0 50%;color:#000;">Фасады</div>
<svg class="b" style="left:1035.0px;top:248.4px;" width="14" height="13" viewBox="0 0 14 13"><path d="M1 11.500v-6l3-3h7l1.500 3v6z" stroke="#1a1a1a" stroke-width="1.1" fill="none" stroke-linejoin="round"/></svg>
<div class="t" style="left:1052.0px;top:249.9px;font-size:8.60px;line-height:10.32px;transform:scaleX(0.9622);transform-origin:0 50%;color:#000;">Восточный Фасад (Автоматич</div>
<svg class="b" style="left:1035.0px;top:264.6px;" width="14" height="13" viewBox="0 0 14 13"><path d="M1 11.500v-6l3-3h7l1.500 3v6z" stroke="#1a1a1a" stroke-width="1.1" fill="none" stroke-linejoin="round"/></svg>
<div class="t" style="left:1052.0px;top:266.1px;font-size:8.60px;line-height:10.32px;transform:scaleX(0.9503);transform-origin:0 50%;color:#000;">Западный Фасад (Автоматиче</div>
<svg class="b" style="left:1035.0px;top:280.8px;" width="14" height="13" viewBox="0 0 14 13"><path d="M1 11.500v-6l3-3h7l1.500 3v6z" stroke="#1a1a1a" stroke-width="1.1" fill="none" stroke-linejoin="round"/></svg>
<div class="t" style="left:1052.0px;top:282.3px;font-size:8.60px;line-height:10.32px;transform:scaleX(0.9457);transform-origin:0 50%;color:#000;">Северный Фасад (Автоматиче</div>
<svg class="b" style="left:1035.0px;top:297.0px;" width="14" height="13" viewBox="0 0 14 13"><path d="M1 11.500v-6l3-3h7l1.500 3v6z" stroke="#1a1a1a" stroke-width="1.1" fill="none" stroke-linejoin="round"/></svg>
<div class="t" style="left:1052.0px;top:298.5px;font-size:8.60px;line-height:10.32px;transform:scaleX(0.9658);transform-origin:0 50%;color:#000;">Южный Фасад (Автоматическ</div>
<svg class="b" style="left:1027.5px;top:313.2px;" width="14" height="13" viewBox="0 0 14 13"><path d="M1 1.500h4v10h-4zM5 1.500h7.500v10h-7.500M8 4h2.500v2.500h-2.500z" stroke="#1a1a1a" stroke-width="1.1" fill="none" stroke-linejoin="round"/></svg>
<div class="t" style="left:1044.5px;top:314.7px;font-size:8.60px;line-height:10.32px;transform:scaleX(0.9893);transform-origin:0 50%;color:#000;">Развертки</div>
<svg class="b" style="left:1027.5px;top:329.4px;" width="14" height="13" viewBox="0 0 14 13"><path d="M1 11.500v-9.500h11.500v9.500zM3 9.500l5.500-5 2 2-5.500 4z" stroke="#1a1a1a" stroke-width="1.1" fill="none" stroke-linejoin="round"/></svg>
<div class="t" style="left:1044.5px;top:330.9px;font-size:8.60px;line-height:10.32px;transform:scaleX(0.9824);transform-origin:0 50%;color:#000;">Рабочие Листы</div>
<svg class="b" style="left:1027.5px;top:345.6px;" width="14" height="13" viewBox="0 0 14 13"><circle cx="6.500" cy="6.500" r="5.500" stroke="#1a1a1a" stroke-width="1.1" fill="none" stroke-linejoin="round"/><path d="M5 1.200v10.600M5 5h6.500M5 8.500h6.500" stroke="#1a1a1a" stroke-width="1.1" fill="none" stroke-linejoin="round"/></svg>
<div class="t" style="left:1044.5px;top:347.1px;font-size:8.60px;line-height:10.32px;transform:scaleX(0.9733);transform-origin:0 50%;color:#000;">Детали</div>
<svg class="b" style="left:1027.5px;top:361.8px;" width="14" height="13" viewBox="0 0 14 13"><rect x="1" y="1.500" width="11.500" height="10" rx="1.500" stroke="#1a1a1a" stroke-width="1.1" fill="none" stroke-linejoin="round"/><path d="M4 5h4.500v4h-4.500zM4 5l1.500-1.500h4.500v4l-1.500 1.500" stroke="#1a1a1a" stroke-width=".9" fill="none"/></svg>
<div class="t" style="left:1044.5px;top:363.3px;font-size:8.60px;line-height:10.32px;transform:scaleX(0.9689);transform-origin:0 50%;color:#000;">3D-документы</div>
<svg class="b" style="left:1016.5px;top:381.5px;" width="8" height="6" viewBox="0 0 8 6"><path d="M1 1.200l3 3 3-3" stroke="#222" stroke-width="1.200" fill="none"/></svg>
<svg class="b" style="left:1027.5px;top:378.0px;" width="14" height="13" viewBox="0 0 14 13"><path d="M2 2.500l7-1.500 2.500 1.500v8l-2.500 2-7-1.500zM9 1v11.500" stroke="#1a1a1a" stroke-width="1.1" fill="none" stroke-linejoin="round"/></svg>
<div class="t" style="left:1044.5px;top:379.5px;font-size:8.60px;line-height:10.32px;transform:scaleX(0.9097);transform-origin:0 50%;color:#000;">3D</div>
<svg class="b" style="left:1035.0px;top:394.2px;" width="14" height="13" viewBox="0 0 14 13"><path d="M1.500 2.500l7-1.500 3 2v7.500l-3 2-7-1.500zM8.500 1v11.500" stroke="#1a1a1a" stroke-width="1.1" fill="none" stroke-linejoin="round"/></svg>
<div class="t" style="left:1052.0px;top:395.7px;font-size:8.60px;line-height:10.32px;transform:scaleX(0.9772);transform-origin:0 50%;color:#000;">Общая Перспектива</div>
<svg class="b" style="left:1035.0px;top:410.4px;" width="14" height="13" viewBox="0 0 14 13"><path d="M1.500 4.500l3-3h7.500v7l-3 3.500h-7.500zM1.500 4.500h7.500v7.500M9 4.500l3-3" stroke="#1a1a1a" stroke-width="1.1" fill="none" stroke-linejoin="round"/></svg>
<div class="t" style="left:1052.0px;top:411.9px;font-size:8.60px;line-height:10.32px;transform:scaleX(0.9952);transform-origin:0 50%;color:#000;">Общая Аксонометрия</div>
<svg class="b" style="left:1016.5px;top:430.1px;" width="8" height="6" viewBox="0 0 8 6"><path d="M1 1.200l3 3 3-3" stroke="#222" stroke-width="1.200" fill="none"/></svg>
<svg class="b" style="left:1027.5px;top:426.6px;" width="14" height="13" viewBox="0 0 14 13"><path d="M1.500 1h10v11.500h-10zM1.500 4h10M1.500 7h10M1.500 10h10M5 1v11.500M8.500 1v11.500" stroke="#1a1a1a" stroke-width="1" fill="none"/></svg>
<div class="t" style="left:1044.5px;top:428.1px;font-size:8.60px;line-height:10.32px;transform:scaleX(0.9705);transform-origin:0 50%;color:#000;">Каталоги</div>
<svg class="b" style="left:1023.5px;top:446.3px;" width="8" height="6" viewBox="0 0 8 6"><path d="M1 1.200l3 3 3-3" stroke="#222" stroke-width="1.200" fill="none"/></svg>
<svg class="b" style="left:1035.0px;top:442.8px;" width="14" height="13" viewBox="0 0 14 13"><path d="M.5 4h13v5h-13z" stroke="#1a1a1a" stroke-width="1" fill="#888"/><path d="M2 9l3-5M5 9l3-5M8 9l3-5M11 9l2.500-4" stroke="#fff" stroke-width=".9"/></svg>
<div class="t" style="left:1052.0px;top:444.3px;font-size:8.60px;line-height:10.32px;transform:scaleX(0.9331);transform-origin:0 50%;color:#000;">Элементы</div>
<svg class="b" style="left:1043.8px;top:459.0px;" width="14" height="13" viewBox="0 0 14 13"><path d="M1.500 1h10v11.500h-10zM1.500 4h10M1.500 7h10M1.500 10h10M5 1v11.500M8.500 1v11.500" stroke="#1a1a1a" stroke-width="1" fill="none"/></svg>
<div class="t" style="left:1058.7px;top:460.5px;font-size:8.60px;line-height:10.32px;transform:scaleX(0.9482);transform-origin:0 50%;color:#000;">ИКЭ-01 Каталог Стен</div>
<svg class="b" style="left:1043.8px;top:475.2px;" width="14" height="13" viewBox="0 0 14 13"><path d="M1.500 1h10v11.500h-10zM1.500 4h10M1.500 7h10M1.500 10h10M5 1v11.500M8.500 1v11.500" stroke="#1a1a1a" stroke-width="1" fill="none"/></svg>
<div class="t" style="left:1058.7px;top:476.7px;font-size:8.60px;line-height:10.32px;transform:scaleX(0.9639);transform-origin:0 50%;color:#000;">ИКЭ-02 Каталог Всех Проем</div>
<svg class="b" style="left:1043.8px;top:491.4px;" width="14" height="13" viewBox="0 0 14 13"><path d="M1.500 1h10v11.500h-10zM1.500 4h10M1.500 7h10M1.500 10h10M5 1v11.500M8.500 1v11.500" stroke="#1a1a1a" stroke-width="1" fill="none"/></svg>
<div class="t" style="left:1058.7px;top:492.9px;font-size:8.60px;line-height:10.32px;transform:scaleX(0.9603);transform-origin:0 50%;color:#000;">ИКЭ-03 Каталог Дверей</div>
<svg class="b" style="left:1043.8px;top:507.6px;" width="14" height="13" viewBox="0 0 14 13"><path d="M1.500 1h10v11.500h-10zM1.500 4h10M1.500 7h10M1.500 10h10M5 1v11.500M8.500 1v11.500" stroke="#1a1a1a" stroke-width="1" fill="none"/></svg>
<div class="t" style="left:1058.7px;top:509.1px;font-size:8.60px;line-height:10.32px;transform:scaleX(0.9777);transform-origin:0 50%;color:#000;">ИКЭ-04 Каталог Окон</div>
<svg class="b" style="left:1043.8px;top:523.8px;" width="14" height="5" viewBox="0 0 14 5"><path d="M1.500 1h10v11.500h-10zM1.500 4h10M1.500 7h10M1.500 10h10M5 1v11.500M8.500 1v11.500" stroke="#1a1a1a" stroke-width="1" fill="none"/></svg>
<div class="b" style="left:1167.5px;top:134.0px;width:1.0px;height:393.0px;background:#fff;"></div>
<div class="b" style="left:1004.3px;top:527.0px;width:175.7px;height:14.0px;background:#f0f0f0;"></div>
<div class="b" style="left:1016.8px;top:528.5px;width:78.2px;height:10.0px;background:#c8c8c8;"></div>
<svg class="b" style="left:1007.0px;top:530.5px;" width="6" height="8" viewBox="0 0 6 8"><path d="M4.800 1l-3 3 3 3" stroke="#222" stroke-width="1.300" fill="none"/></svg>
<svg class="b" style="left:1158.0px;top:530.5px;" width="6" height="8" viewBox="0 0 6 8"><path d="M1.200 1l3 3-3 3" stroke="#222" stroke-width="1.300" fill="none"/></svg>
<svg class="b" style="left:1118.0px;top:545.0px;" width="14" height="14" viewBox="0 0 14 14"><path d="M1.500 2h10.500v9.500h-10.500z" stroke="#222" stroke-width="1" fill="none"/><path d="M6.500 6.500h6v6h-6z" stroke="#2a6fc0" stroke-width="1" fill="#dbeaf8"/><path d="M8.500 9h2v2h-2z" fill="#2a6fc0"/></svg>
<svg class="b" style="left:1140.0px;top:543.0px;" width="16" height="16" viewBox="0 0 16 16"><path d="M1.500 5h4l1-1.500h3M13 9v5.500h-11.500v-9.500" stroke="#222" stroke-width="1" fill="none"/><circle cx="11.500" cy="5" r="3.800" stroke="#2a6fc0" stroke-width="1" fill="#fff"/><path d="M9.500 5h4M11.500 3v4" stroke="#2a6fc0" stroke-width="1"/></svg>
<svg class="b" style="left:1163.0px;top:546.0px;" width="12" height="12" viewBox="0 0 12 12"><path d="M1.500 1.500l9 9M10.500 1.500l-9 9" stroke="#e0641a" stroke-width="1.500"/></svg>
<div class="b" style="left:1006.0px;top:565.5px;width:172.0px;height:14.5px;background:#d4d4d4;"></div>
<svg class="b" style="left:1010.5px;top:571.0px;" width="6" height="4" viewBox="0 0 6 4"><path d="M0 0h6l-3 3.600z" fill="#111"/></svg>
<div class="t" style="left:1024.0px;top:567.5px;font-size:8.60px;line-height:10.32px;transform:scaleX(0.9269);transform-origin:0 50%;color:#000;">Свойства</div>
<svg class="b" style="left:1007.0px;top:585.5px;" width="12" height="11" viewBox="0 0 12 11"><path d="M1 9.500v-7.500h3.500l1 1.500h5v6z" stroke="#222" stroke-width="1" fill="none"/></svg>
<div class="t" style="left:1021.0px;top:586.0px;font-size:8.60px;line-height:10.32px;transform:scaleX(0.9761);transform-origin:0 50%;color:#000;">1.</div>
<div class="b" style="left:1061.0px;top:584.0px;width:117.0px;height:13.5px;background:#fff;border:1px solid #555;"></div>
<div class="t" style="left:1064.5px;top:586.2px;font-size:8.30px;line-height:9.96px;transform:scaleX(0.9923);transform-origin:0 50%;color:#000;">1-й этаж</div>
<div class="b" style="left:1004.3px;top:598.0px;width:175.7px;height:19.0px;background:#f9f9f9;"></div>
<div class="b" style="left:1006.0px;top:600.5px;width:172.0px;height:14.5px;background:#e1e1e1;border:1px solid #adadad;"></div>
<div class="t" style="left:1066.5px;top:602.8px;font-size:8.60px;line-height:10.32px;transform:scaleX(0.9621);transform-origin:0 50%;color:#000;">Параметры...</div>
<div class="b" style="left:0.0px;top:601.4px;width:69.0px;height:17.2px;background:#f0f0f0;"></div>
<div class="b" style="left:69.0px;top:602.8px;width:935.3px;height:14.6px;background:#f5f5f5;"></div>
<svg class="b" style="left:69.0px;top:604.2px;" width="13" height="13" viewBox="0 0 15 15"><path d="M3 12a5 5 0 1 0 .5-6.500M2 3v4h4" stroke="#222" stroke-width="1" fill="none"/><path d="M1.500 13.500l3-3" stroke="#222" stroke-width="1" fill="none"/></svg>
<svg class="b" style="left:86.0px;top:604.2px;" width="13" height="13" viewBox="0 0 15 15"><path d="M12 12a5 5 0 1 1-.5-6.500M13 3v4h-4" stroke="#b5b5b5" stroke-width="1" fill="none"/><path d="M13.500 13.500l-3-3" stroke="#b5b5b5" stroke-width="1" fill="none"/></svg>
<svg class="b" style="left:104.0px;top:604.2px;" width="13" height="13" viewBox="0 0 15 15"><circle cx="6.500" cy="6.500" r="4.800" stroke="#222" stroke-width="1" fill="none"/><path d="M10 10l4 4M4 6.500h5M6.500 4v5" stroke="#222" stroke-width="1" fill="none"/></svg>
<div class="b" style="left:121.5px;top:604.0px;width:1.0px;height:13.5px;background:#b4b4b4;"></div>
<svg class="b" style="left:124.0px;top:604.2px;" width="13" height="13" viewBox="0 0 15 15"><circle cx="6.500" cy="6.500" r="4.800" stroke="#222" stroke-width="1" fill="none"/><path d="M10 10l4 4" stroke="#222" stroke-width="1" fill="none"/><path d="M4.500 5l1.500-.500M8.500 5l-1.500-.500M4.500 8l1.500.500M8.500 8l-1.500.500" stroke="#222" stroke-width="1.200"/></svg>
<div class="t" style="left:161.7px;top:606.0px;font-size:8.30px;line-height:9.96px;transform:scaleX(0.9186);transform-origin:0 50%;color:#000;">192%</div>
<svg class="b" style="left:201.5px;top:608.5px;" width="3" height="5" viewBox="0 0 3 5"><path d="M0 0v5l3-2.500z" fill="#111"/></svg>
<div class="b" style="left:210.0px;top:604.0px;width:1.0px;height:13.5px;background:#b4b4b4;"></div>
<svg class="b" style="left:213.0px;top:604.5px;" width="14" height="13" viewBox="0 0 14 13"><path d="M2 6.500l4-4 5 3-3.500 4.500zM9 11l3-1.500-1-2.500" stroke="#222" stroke-width="1" fill="none"/></svg>
<div class="t" style="left:250.7px;top:606.0px;font-size:8.30px;line-height:9.96px;transform:scaleX(0.9244);transform-origin:0 50%;color:#000;">0,00°</div>
<svg class="b" style="left:289.5px;top:608.5px;" width="3" height="5" viewBox="0 0 3 5"><path d="M0 0v5l3-2.500z" fill="#111"/></svg>
<div class="b" style="left:298.5px;top:604.0px;width:1.0px;height:13.5px;background:#b4b4b4;"></div>
<svg class="b" style="left:302.0px;top:606.5px;" width="13" height="8" viewBox="0 0 13 8"><path d="M.5 1.500h11.500v5h-11.500zM3 6.500v-2M5.500 6.500v-2M8 6.500v-2M10 6.500v-2" stroke="#222" stroke-width="1" fill="none"/></svg>
<div class="t" style="left:339.0px;top:606.0px;font-size:8.30px;line-height:9.96px;transform:scaleX(0.9871);transform-origin:0 50%;color:#000;">1:100</div>
<svg class="b" style="left:378.5px;top:608.5px;" width="3" height="5" viewBox="0 0 3 5"><path d="M0 0v5l3-2.500z" fill="#111"/></svg>
<div class="b" style="left:384.5px;top:604.0px;width:1.0px;height:13.5px;background:#b4b4b4;"></div>
<svg class="b" style="left:389.0px;top:604.0px;" width="14" height="14" viewBox="0 0 14 14"><path d="M2 5l2-2.500h9l-2 2.500zM2 8.500l2-2.500h9l-2 2.500zM2 12l2-2.500h9l-2 2.500z" stroke="#222" stroke-width="1" fill="none"/></svg>
<div class="t" style="left:417.0px;top:606.0px;font-size:8.30px;line-height:9.96px;transform:scaleX(1.0150);transform-origin:0 50%;color:#000;">02 Чертеж</div>
<svg class="b" style="left:466.5px;top:608.5px;" width="3" height="5" viewBox="0 0 3 5"><path d="M0 0v5l3-2.500z" fill="#111"/></svg>
<div class="b" style="left:476.0px;top:604.0px;width:1.0px;height:13.5px;background:#b4b4b4;"></div>
<svg class="b" style="left:479.0px;top:604.5px;" width="13" height="13" viewBox="0 0 13 13"><path d="M1 2h10.500v9.500h-10.500zM1 5h10.500M4.500 5v6.500" stroke="#222" stroke-width="1" fill="none"/></svg>
<div class="t" style="left:500.0px;top:606.0px;font-size:8.30px;line-height:9.96px;transform:scaleX(1.0156);transform-origin:0 50%;color:#000;">Вся Модель</div>
<div class="b" style="left:563.3px;top:604.0px;width:1.0px;height:13.5px;background:#b4b4b4;"></div>
<svg class="b" style="left:569.0px;top:604.0px;" width="11" height="14" viewBox="0 0 11 14"><path d="M2.500 1.500v6.500a3 3 0 0 0 6 0v-6.500M5.500 11v2.500" stroke="#222" stroke-width="1" fill="none"/></svg>
<div class="t" style="left:586.6px;top:606.0px;font-size:8.30px;line-height:9.96px;transform:scaleX(1.0052);transform-origin:0 50%;color:#000;">01 Архитект...</div>
<svg class="b" style="left:644.1px;top:608.5px;" width="3" height="5" viewBox="0 0 3 5"><path d="M0 0v5l3-2.500z" fill="#111"/></svg>
<div class="b" style="left:652.5px;top:604.0px;width:1.0px;height:13.5px;background:#b4b4b4;"></div>
<svg class="b" style="left:656.0px;top:605.0px;" width="13" height="12" viewBox="0 0 13 12"><path d="M1 1.500h11v8.500h-11zM3.500 4h6v3.500h-6z" stroke="#222" stroke-width="1" fill="none"/></svg>
<div class="t" style="left:675.0px;top:606.0px;font-size:8.30px;line-height:9.96px;transform:scaleX(0.9968);transform-origin:0 50%;color:#000;">04 Проект - ...</div>
<svg class="b" style="left:731.5px;top:608.5px;" width="3" height="5" viewBox="0 0 3 5"><path d="M0 0v5l3-2.500z" fill="#111"/></svg>
<div class="b" style="left:741.0px;top:604.0px;width:1.0px;height:13.5px;background:#b4b4b4;"></div>
<svg class="b" style="left:745.0px;top:604.5px;" width="14" height="13" viewBox="0 0 14 13"><path d="M1 3.500h7v7.500h-7zM3 3.500v-2h8v7.500h-3M3.500 6.500h2.500M3.500 8.500h2.500" stroke="#222" stroke-width="1" fill="none"/></svg>
<div class="t" style="left:768.0px;top:606.0px;font-size:8.30px;line-height:9.96px;transform:scaleX(0.9679);transform-origin:0 50%;color:#000;">Без Замены</div>
<svg class="b" style="left:820.5px;top:608.5px;" width="3" height="5" viewBox="0 0 3 5"><path d="M0 0v5l3-2.500z" fill="#111"/></svg>
<div class="b" style="left:829.5px;top:604.0px;width:1.0px;height:13.5px;background:#b4b4b4;"></div>
<svg class="b" style="left:834.0px;top:604.0px;" width="14" height="14" viewBox="0 0 14 14"><path d="M2 12.500v-6l4-4.500 3 3v7.500zM9 8l4 4.500h-4" stroke="#222" stroke-width="1" fill="none"/></svg>
<div class="t" style="left:852.0px;top:606.0px;font-size:8.30px;line-height:9.96px;transform:scaleX(0.9904);transform-origin:0 50%;color:#000;">00 Показать ...</div>
<svg class="b" style="left:908.5px;top:608.5px;" width="3" height="5" viewBox="0 0 3 5"><path d="M0 0v5l3-2.500z" fill="#111"/></svg>
<div class="b" style="left:0.0px;top:617.4px;width:1180.0px;height:17.2px;background:#f1f1f1;border-top:1px solid #e6e6e6;"></div>
<div class="t" style="left:2.0px;top:621.9px;font-size:9.00px;line-height:10.80px;transform:scaleX(0.9734);transform-origin:0 50%;color:#000;">Щелкните на элементе или начертите область выбора. Нажмите и не отпускайте Ctrl+Shift для переключения выбора элемента/подэлемента.</div>
<div class="b" style="left:1066.0px;top:620.0px;width:1.0px;height:13.0px;background:#cfcfcf;"></div>
<div class="b" style="left:1162.5px;top:620.0px;width:1.0px;height:13.0px;background:#cfcfcf;"></div>
<svg class="b" style="left:1051.0px;top:621.0px;" width="14" height="12" viewBox="0 0 14 12"><path d="M1 1.500h9v7h-9zM3.500 3.500h9.500v7.500h-9.500z" stroke="#333" stroke-width="1.200" fill="#f0f0f0"/></svg>
<div class="t" style="left:1078.5px;top:621.4px;font-size:9.30px;line-height:11.16px;transform:scaleX(0.9977);transform-origin:0 50%;color:#9a9a9a;">GRAPHISOFT ID</div>
<div class="b" style="left:0.0px;top:634.6px;width:1180.0px;height:29.4px;background:#0d0d0d;"></div>
<svg class="b" style="left:11.5px;top:642.8px;" width="12.6" height="12.6" viewBox="0 0 13.8 13.8"><path d="M0 0h6.300v6.300h-6.300zM7.500 0h6.300v6.300h-6.300zM0 7.500h6.300v6.300h-6.300zM7.500 7.500h6.300v6.300h-6.300z" fill="#fff"/></svg>
<div class="b" style="left:35.6px;top:634.6px;width:212.4px;height:29.4px;background:#f4f4f4;"></div>
<svg class="b" style="left:44.0px;top:642.0px;" width="14" height="14" viewBox="0 0 14 14"><circle cx="7.800" cy="5.400" r="3.900" stroke="#222" stroke-width="1.200" fill="none"/><path d="M5.200 8.300l-4.500 4.500" stroke="#222" stroke-width="1.200"/></svg>
<div class="t" style="left:65.5px;top:643.2px;font-size:11.00px;line-height:13.20px;transform:scaleX(1.0335);transform-origin:0 50%;color:#333;">Поиск</div>
<svg class="b" style="left:198.0px;top:634.6px;" width="50" height="29.4" viewBox="0 0 50 29.4"><defs><clipPath id="dp"><rect x="0" y="0" width="50" height="29.400"/></clipPath></defs><g clip-path="url(#dp)"><path d="M4 30c6-14 18-18 30-18s16 6 18 10v10z" fill="#7fc1ea"/><path d="M0 30c4-10 10-14 18-15-6 4-10 9-12 15z" fill="#3f8fd0"/><path d="M14 21c6-3 26-5 36 0v-4h-36z" fill="#6a9a3a"/><ellipse cx="17" cy="13" rx="6" ry="4" fill="#7c9a35"/><ellipse cx="36" cy="9" rx="7" ry="4.500" fill="#86a33b"/><ellipse cx="27" cy="16" rx="5" ry="3" fill="#5f8a2e"/><ellipse cx="45" cy="15" rx="5" ry="3.500" fill="#6d9433"/><path d="M17 15v6M36 11v8" stroke="#6b4a2a" stroke-width="1.500"/><path d="M8 24c2-12 10-20 18-24" stroke="#c8dbe8" stroke-width="1" fill="none"/></g></svg>
<svg class="b" style="left:259.5px;top:642.0px;" width="17" height="14" viewBox="0 0 17 14"><path d="M0 1h6l1.500 1.500h8.500v10.500h-16z" fill="#f3c64a"/><path d="M0 4.500h16v8.500h-16z" fill="#f9dc7c"/><path d="M3.500 7.500h9v5.500h-9z" fill="#3f8fd6"/><path d="M5.500 10.500h5v2.500h-5z" fill="#f9dc7c"/></svg>
<div class="b" style="left:289.0px;top:634.6px;width:30.2px;height:29.4px;background:#b4131a;"></div>
<div class="b" style="left:289.0px;top:662.0px;width:30.2px;height:2.0px;background:#ff2a2a;"></div>
<svg class="b" style="left:294.0px;top:639.0px;" width="20" height="20" viewBox="0 0 20 20"><ellipse cx="10" cy="9.800" rx="6.800" ry="7.600" fill="none" stroke="#ea2631" stroke-width="3.600"/></svg>
<div class="b" style="left:331.0px;top:639.8px;width:18.0px;height:18.2px;background:#fff;"></div>
<div class="t" style="left:332.3px;top:638.2px;font-size:19.00px;line-height:22.80px;transform:scaleX(1.0932);transform-origin:0 50%;font-weight:bold;color:#c2202a;">A</div>
<div class="b" style="left:325.0px;top:662.0px;width:30.0px;height:2.0px;background:#9fc8ea;"></div>
<div class="b" style="left:358.0px;top:634.6px;width:36.8px;height:29.4px;background:#343434;"></div>
<div class="b" style="left:358.0px;top:662.0px;width:36.8px;height:2.0px;background:#a5cdf0;"></div>
<svg class="b" style="left:366.0px;top:639.0px;" width="20" height="20" viewBox="0 0 20 20"><circle cx="10" cy="10" r="9" fill="#3057b3"/><path d="M3 14.500 C5.500 7 11 4 16.500 6.500" stroke="#fff" stroke-width="2.200" fill="none"/><path d="M16.500 6.500v6" stroke="#fff" stroke-width="1.300"/></svg>
<svg class="b" style="left:1000.0px;top:645.0px;" width="10" height="8" viewBox="0 0 10 8"><path d="M1 6l4-4 4 4" stroke="#fff" stroke-width="1.200" fill="none"/></svg>
<svg class="b" style="left:1016.0px;top:642.0px;" width="14" height="14" viewBox="0 0 14 14"><path d="M2 12.500a10.500 10.500 0 0 1 10.500-10.500M5 12.500a7.500 7.500 0 0 1 7.500-7.500M8 12.500a4.500 4.500 0 0 1 4.500-4.500" stroke="#bbb" stroke-width="1.100" fill="none"/><circle cx="11.500" cy="11.500" r="1.500" fill="#fff"/></svg>
<svg class="b" style="left:1032.0px;top:644.0px;" width="14" height="10" viewBox="0 0 14 10"><path d="M3 2.500h9.500v5.500h-9.500z" stroke="#fff" stroke-width="1.100" fill="none"/><path d="M1 1h3.500v3h-3.500z" stroke="#fff" stroke-width="1" fill="#0d0d0d"/><path d="M4.500 5.300h6.500" stroke="#bbb" stroke-width="1.600"/></svg>
<svg class="b" style="left:1049.0px;top:642.0px;" width="16" height="14" viewBox="0 0 16 14"><path d="M1.500 5h2.500l3-3v10l-3-3h-2.500z" stroke="#fff" stroke-width="1.200" fill="none"/><path d="M9.500 4.500a3.500 3.500 0 0 1 0 5M11.500 2.500a6.500 6.500 0 0 1 0 9" stroke="#fff" stroke-width="1.200" fill="none"/></svg>
<div class="t" style="left:1071.0px;top:643.8px;font-size:9.20px;line-height:11.04px;transform:scaleX(0.8956);transform-origin:0 50%;color:#fff;">РУС</div>
<div class="t" style="left:1106.0px;top:637.1px;font-size:9.30px;line-height:11.16px;transform:scaleX(0.8809);transform-origin:0 50%;color:#fff;">21:16</div>
<div class="t" style="left:1096.5px;top:650.6px;font-size:9.30px;line-height:11.16px;transform:scaleX(0.8724);transform-origin:0 50%;color:#fff;">27.11.2023</div>
<svg class="b" style="left:1148.5px;top:642.5px;" width="14" height="13" viewBox="0 0 14 13"><path d="M1 1h12v8.200h-4l-2 2-2-2h-4z" stroke="#fff" stroke-width="1.200" fill="none"/></svg>
<div class="b" style="left:1177.0px;top:634.6px;width:1.0px;height:29.4px;background:#555;"></div>
<svg class="b" style="left:0;top:0" width="1180" height="664" viewBox="0 0 1180 664"><defs><filter id="rough" x="-5%" y="-5%" width="110%" height="110%"><feTurbulence type="fractalNoise" baseFrequency=".55" numOctaves="2" seed="3" result="n"/><feDisplacementMap in="SourceGraphic" in2="n" scale="2.2" xChannelSelector="R" yChannelSelector="G" result="d"/><feColorMatrix in="n" type="matrix" values="0 0 0 0 1  0 0 0 0 .62  0 0 0 0 .2  0 0 0 1.1 -.42" result="c"/><feComposite in="c" in2="d" operator="in" result="cc"/><feMerge><feMergeNode in="d"/><feMergeNode in="cc"/></feMerge></filter></defs><g filter="url(#rough)"><path d="M451.2 293.2C451.4 289.3 452.9 284.6 454.8 280.6C456.7 276.6 459.4 272.4 462.6 269.0C465.8 265.6 469.7 262.1 473.8 259.9C477.9 257.7 482.6 256.4 487.5 255.7C492.4 255.0 498.4 255.4 503.3 255.9C508.2 256.4 512.4 256.9 517.0 258.5C521.6 260.1 526.3 262.1 530.7 265.2C535.1 268.2 539.6 272.6 543.3 276.8C547.0 281.0 550.0 285.6 552.8 290.1C555.6 294.6 558.5 299.4 560.2 303.8C561.9 308.2 562.8 312.9 562.9 316.4C563.0 319.9 562.5 322.2 560.8 324.9C559.1 327.6 556.2 330.3 552.8 332.7C549.4 335.1 545.3 337.0 540.2 339.0C535.1 341.0 527.8 343.5 522.2 344.9C516.6 346.3 511.1 347.2 506.4 347.6C501.7 348.0 497.8 348.1 493.8 347.0C489.8 345.9 486.1 343.9 482.2 341.1C478.3 338.4 474.2 334.6 470.6 330.5C467.0 326.4 463.3 321.2 460.5 316.8C457.7 312.4 455.2 308.1 453.7 304.2C452.1 300.3 451.0 297.1 451.2 293.2z" stroke="#ef8122" stroke-width="12.6" fill="none" stroke-linejoin="round"/><path d="M448.7 292.8C448.9 288.7 450.5 283.8 452.5 279.6C454.5 275.4 457.3 271.1 460.6 267.5C463.9 263.9 468.0 260.3 472.3 258.0C476.7 255.7 481.5 254.3 486.6 253.6C491.8 252.9 498.0 253.3 503.2 253.8C508.3 254.3 512.7 254.9 517.5 256.5C522.2 258.1 527.2 260.3 531.8 263.5C536.4 266.7 541.1 271.3 545.0 275.6C548.8 280.0 551.9 284.8 554.9 289.5C557.8 294.2 560.9 299.3 562.6 303.9C564.4 308.4 565.3 313.4 565.4 317.0C565.5 320.7 565.0 323.1 563.2 325.9C561.5 328.7 558.5 331.6 554.9 334.1C551.3 336.5 547.0 338.5 541.7 340.6C536.4 342.8 528.8 345.3 522.9 346.8C517.0 348.3 511.3 349.3 506.4 349.6C501.4 350.0 497.4 350.1 493.2 349.0C489.0 347.9 485.1 345.7 481.1 342.8C477.1 340.0 472.8 336.0 469.0 331.8C465.2 327.5 461.4 322.0 458.4 317.4C455.5 312.9 452.9 308.4 451.3 304.3C449.7 300.2 448.5 296.9 448.7 292.8z" stroke="#e8701a" stroke-width="0.9" fill="none" opacity=".7"/><path d="M453.4 293.6C453.6 289.8 455.0 285.3 456.9 281.5C458.7 277.6 461.3 273.6 464.4 270.3C467.4 267.0 471.1 263.7 475.1 261.6C479.1 259.5 483.5 258.2 488.3 257.6C493.0 256.9 498.7 257.3 503.4 257.8C508.1 258.2 512.2 258.8 516.6 260.3C521.0 261.7 525.5 263.8 529.7 266.7C533.9 269.6 538.3 273.8 541.8 277.8C545.4 281.8 548.2 286.3 550.9 290.6C553.7 294.9 556.4 299.5 558.1 303.7C559.7 308.0 560.5 312.5 560.6 315.8C560.7 319.2 560.2 321.4 558.6 324.0C557.0 326.6 554.2 329.2 550.9 331.5C547.7 333.7 543.7 335.6 538.9 337.5C534.0 339.5 527.0 341.8 521.6 343.2C516.2 344.6 510.9 345.5 506.4 345.8C501.9 346.1 498.2 346.3 494.3 345.2C490.4 344.2 486.9 342.2 483.2 339.6C479.5 336.9 475.5 333.3 472.0 329.4C468.6 325.5 465.0 320.4 462.3 316.2C459.6 312.0 457.3 307.9 455.8 304.1C454.3 300.4 453.2 297.3 453.4 293.6z" stroke="#f59a45" stroke-width="0.9" fill="none" opacity=".7"/><path d="M451.2 293.2C451.4 289.3 452.9 284.6 454.8 280.6C456.7 276.6 459.4 272.4 462.6 269.0C465.8 265.6 469.7 262.1 473.8 259.9C477.9 257.7 482.6 256.4 487.5 255.7C492.4 255.0 498.4 255.4 503.3 255.9C508.2 256.4 512.4 256.9 517.0 258.5C521.6 260.1 526.3 262.1 530.7 265.2C535.1 268.2 539.6 272.6 543.3 276.8C547.0 281.0 550.0 285.6 552.8 290.1C555.6 294.6 558.5 299.4 560.2 303.8C561.9 308.2 562.8 312.9 562.9 316.4C563.0 319.9 562.5 322.2 560.8 324.9C559.1 327.6 556.2 330.3 552.8 332.7C549.4 335.1 545.3 337.0 540.2 339.0C535.1 341.0 527.8 343.5 522.2 344.9C516.6 346.3 511.1 347.2 506.4 347.6C501.7 348.0 497.8 348.1 493.8 347.0C489.8 345.9 486.1 343.9 482.2 341.1C478.3 338.4 474.2 334.6 470.6 330.5C467.0 326.4 463.3 321.2 460.5 316.8C457.7 312.4 455.2 308.1 453.7 304.2C452.1 300.3 451.0 297.1 451.2 293.2z" stroke="#e97618" stroke-width="0.7" fill="none" opacity=".7"/><path d="M472.0 573.8C472.7 568.2 475.0 556.6 477.9 550.6C480.8 544.6 485.3 540.9 489.5 537.9C493.7 534.9 497.4 533.2 503.2 532.7C509.0 532.2 517.3 533.4 524.3 534.8C531.3 536.2 539.1 538.3 545.4 541.1C551.7 543.9 558.6 547.6 562.3 551.6C566.0 555.6 566.8 559.8 567.5 565.3C568.2 570.8 568.8 578.3 566.5 584.3C564.2 590.3 559.4 596.3 553.8 601.2C548.2 606.1 539.4 611.0 532.7 613.8C526.0 616.6 519.8 618.4 513.8 618.0C507.8 617.6 502.2 615.2 496.9 611.7C491.6 608.2 486.1 601.6 482.2 597.0C478.3 592.4 475.4 588.2 473.7 584.3C472.0 580.4 471.3 579.4 472.0 573.8z" stroke="#ef8122" stroke-width="12.6" fill="none" stroke-linejoin="round"/><path d="M470.0 573.8C470.7 568.0 473.1 555.8 476.1 549.6C479.2 543.3 483.8 539.4 488.2 536.3C492.6 533.2 496.5 531.4 502.6 530.9C508.6 530.3 517.3 531.6 524.6 533.1C532.0 534.5 540.0 536.7 546.7 539.7C553.3 542.6 560.5 546.4 564.3 550.6C568.2 554.8 569.0 559.2 569.8 564.9C570.5 570.6 571.1 578.5 568.7 584.8C566.3 591.1 561.3 597.3 555.4 602.5C549.5 607.6 540.4 612.7 533.4 615.6C526.4 618.6 519.9 620.4 513.6 620.0C507.4 619.6 501.5 617.1 496.0 613.4C490.5 609.8 484.7 602.8 480.6 598.1C476.6 593.3 473.5 588.8 471.7 584.8C470.0 580.8 469.2 579.7 470.0 573.8z" stroke="#e8701a" stroke-width="0.9" fill="none" opacity=".7"/><path d="M473.8 573.8C474.5 568.4 476.7 557.2 479.5 551.5C482.3 545.8 486.6 542.2 490.6 539.3C494.7 536.4 498.2 534.8 503.8 534.3C509.3 533.8 517.3 535.0 524.0 536.3C530.8 537.7 538.2 539.7 544.3 542.4C550.4 545.1 557.0 548.6 560.5 552.5C564.0 556.3 564.8 560.4 565.5 565.6C566.2 570.8 566.7 578.1 564.5 583.9C562.3 589.6 557.8 595.4 552.3 600.1C546.9 604.8 538.5 609.5 532.1 612.2C525.7 614.9 519.7 616.5 513.9 616.2C508.2 615.9 502.8 613.5 497.7 610.2C492.7 606.8 487.3 600.4 483.6 596.0C479.9 591.7 477.1 587.6 475.4 583.9C473.8 580.1 473.1 579.2 473.8 573.8z" stroke="#f59a45" stroke-width="0.9" fill="none" opacity=".7"/><path d="M472.0 573.8C472.7 568.2 475.0 556.6 477.9 550.6C480.8 544.6 485.3 540.9 489.5 537.9C493.7 534.9 497.4 533.2 503.2 532.7C509.0 532.2 517.3 533.4 524.3 534.8C531.3 536.2 539.1 538.3 545.4 541.1C551.7 543.9 558.6 547.6 562.3 551.6C566.0 555.6 566.8 559.8 567.5 565.3C568.2 570.8 568.8 578.3 566.5 584.3C564.2 590.3 559.4 596.3 553.8 601.2C548.2 606.1 539.4 611.0 532.7 613.8C526.0 616.6 519.8 618.4 513.8 618.0C507.8 617.6 502.2 615.2 496.9 611.7C491.6 608.2 486.1 601.6 482.2 597.0C478.3 592.4 475.4 588.2 473.7 584.3C472.0 580.4 471.3 579.4 472.0 573.8z" stroke="#e97618" stroke-width="0.7" fill="none" opacity=".7"/></g></svg>
</body></html>
